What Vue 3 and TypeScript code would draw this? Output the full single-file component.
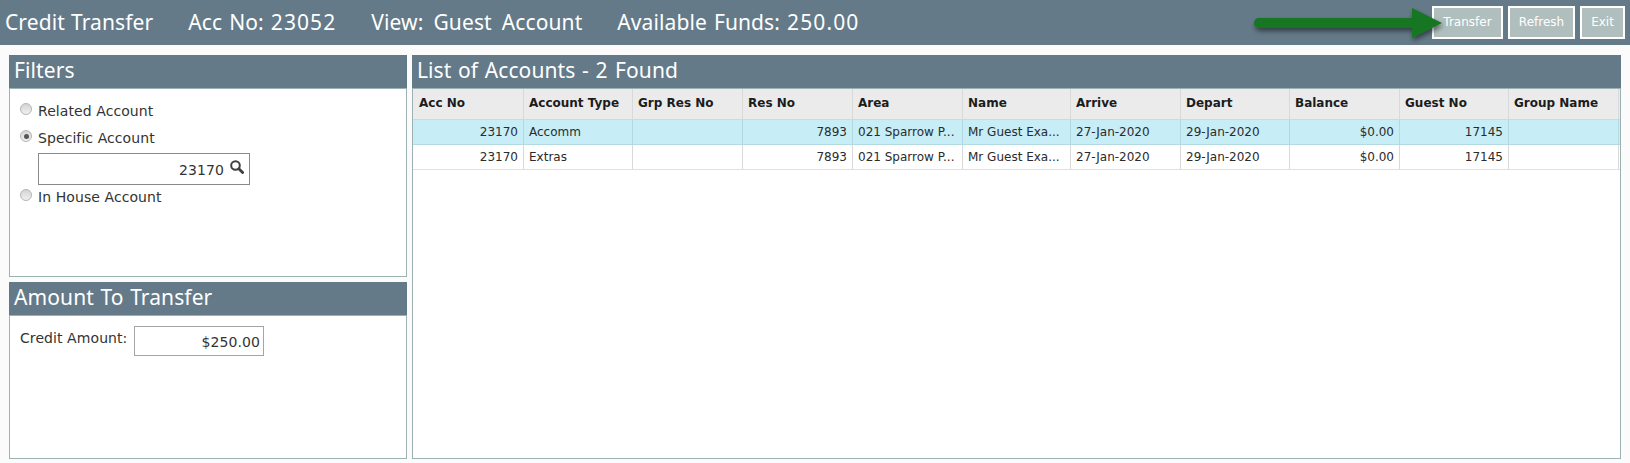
<script setup lang="ts">
const columns = ['Acc No', 'Account Type', 'Grp Res No', 'Res No', 'Area', 'Name', 'Arrive', 'Depart', 'Balance', 'Guest No', 'Group Name']
const rows = [
  ['23170', 'Accomm', '', '7893', '021 Sparrow P...', 'Mr Guest Exa...', '27-Jan-2020', '29-Jan-2020', '$0.00', '17145', ''],
  ['23170', 'Extras', '', '7893', '021 Sparrow P...', 'Mr Guest Exa...', '27-Jan-2020', '29-Jan-2020', '$0.00', '17145', ''],
]
const rightAligned = [0, 3, 8, 9]
</script>

<template>
  <div class="page">
    <header class="topbar">
      <div class="titles">
        <span class="tight">Credit Transfer</span>
        <span>Acc No: <span class="digits">23052</span></span>
        <span class="wide">View: Guest Account</span>
        <span>Available Funds: <span class="digits">250.00</span></span>
      </div>
      <div class="actions">
        <button class="btn transfer">Transfer</button>
        <button class="btn refresh">Refresh</button>
        <button class="btn exit">Exit</button>
      </div>
      <svg class="arrow" width="200" height="46" viewBox="0 0 200 46">
        <defs>
          <filter id="arrowShadow" x="-10%" y="-40%" width="120%" height="190%">
            <feDropShadow dx="1" dy="3" stdDeviation="2.5" flood-color="#000" flood-opacity="0.5" />
          </filter>
        </defs>
        <path
          d="M9 18 H162 V8 L192 23 L162 38 V28 H9 A5 5 0 0 1 9 18 Z"
          fill="#127622"
          filter="url(#arrowShadow)"
        />
      </svg>
    </header>

    <main class="content">
      <div class="left">
        <section class="panel filters">
          <h2 class="panel-title">Filters</h2>
          <div class="panel-body filter-body">
            <label class="radio-row first"><span class="radio"></span>Related Account</label>
            <label class="radio-row second"><span class="radio checked"></span>Specific Account</label>
            <div class="search-box">
              <span class="search-value">23170</span>
              <svg class="search-icon" width="14" height="14" viewBox="0 0 14 14">
                <circle cx="5.5" cy="5.5" r="4.3" fill="none" stroke="#3f3f3f" stroke-width="2" />
                <path d="M8.8 8.8 L12.6 12.6" stroke="#3f3f3f" stroke-width="2.8" stroke-linecap="round" />
              </svg>
            </div>
            <label class="radio-row third"><span class="radio"></span>In House Account</label>
          </div>
        </section>
        <section class="panel amount">
          <h2 class="panel-title">Amount To Transfer</h2>
          <div class="panel-body amount-body">
            <span class="amount-label">Credit Amount:</span>
            <div class="amount-input">$250.00</div>
          </div>
        </section>
      </div>

      <section class="panel list">
        <h2 class="panel-title">List of Accounts - <span class="digits">2</span> Found</h2>
        <div class="panel-body table-body">
          <div class="grid head">
            <div v-for="c in columns" :key="c" class="cell">{{ c }}</div>
          </div>
          <div v-for="(r, i) in rows" :key="i" class="grid row" :class="{ selected: i === 0 }">
            <div
              v-for="(v, j) in r"
              :key="j"
              class="cell"
              :class="{ right: rightAligned.includes(j) }"
            >{{ v }}</div>
          </div>
        </div>
      </section>
    </main>
  </div>
</template>

<style>
html, body { margin: 0; background: #fbfbfb; }
</style>

<style scoped>
.page {
  width: 1630px;
  height: 463px;
  overflow: hidden;
  background: #fbfbfb;
  font-family: "DejaVu Sans", Verdana, sans-serif;
  color: #222;
  display: flex;
  flex-direction: column;
}
.topbar {
  position: relative;
  height: 45px;
  flex: none;
  background: #647a88;
  display: flex;
  align-items: center;
  justify-content: space-between;
  box-sizing: border-box;
  padding: 0 5px;
}
.titles {
  display: flex;
  gap: 35px;
  color: #fff;
  font-family: "Noto Sans", sans-serif;
  font-size: 21px;
  letter-spacing: 0.1px;
  word-spacing: 1.5px;
  margin-top: -1px;
}
.tight { word-spacing: 0.5px; }
.wide { word-spacing: 4.5px; }
.digits { letter-spacing: 1.1px; }
.actions {
  display: flex;
  gap: 5px;
  margin-top: -1px;
}
.btn {
  height: 33px;
  box-sizing: border-box;
  border: 2px solid #fff;
  background: #b0bebe;
  color: #fff;
  font: 12px "DejaVu Sans", sans-serif;
  padding: 0;
}
.transfer { width: 71px; }
.refresh { width: 67px; }
.exit { width: 45px; }
.arrow {
  position: absolute;
  left: 1250px;
  top: 0;
}
.content {
  flex: 1;
  display: flex;
  gap: 5px;
  padding: 10px 9px 4px 9px;
  min-height: 0;
}
.left {
  width: 398px;
  flex: none;
  display: flex;
  flex-direction: column;
  gap: 5px;
}
.panel {
  display: flex;
  flex-direction: column;
  box-sizing: border-box;
  min-height: 0;
}
.filters { height: 222px; }
.amount { height: 177px; }
.list { flex: 1; }
.panel-title {
  margin: 0;
  height: 33px;
  flex: none;
  box-sizing: border-box;
  background: #647a88;
  color: #fff;
  font-family: "Noto Sans", sans-serif;
  font-size: 21px;
  font-weight: 400;
  line-height: 31px;
  padding-left: 5px;
  letter-spacing: 0.1px;
  word-spacing: 1px;
}
.panel-body {
  flex: 1;
  background: #fff;
  border: 1px solid #9db1b3;
  box-sizing: border-box;
  min-height: 0;
}
.filter-body {
  display: flex;
  flex-direction: column;
  align-items: flex-start;
  font-size: 14px;
  letter-spacing: 0.08px;
  color: #333;
  padding: 0 0 0 10px;
}
.radio-row {
  display: flex;
  align-items: center;
  gap: 6px;
  height: 17px;
  white-space: nowrap;
}
.radio-row.first { margin-top: 13px; }
.radio-row.second { margin-top: 10px; }
.radio-row.third { margin-top: 3px; }
.radio {
  width: 12px;
  height: 12px;
  border-radius: 50%;
  border: 1px solid #b5b5b5;
  background: linear-gradient(#d4d4d4, #f0f0f0);
  box-sizing: border-box;
  margin-top: -3px;
  position: relative;
}
.radio.checked::after {
  content: "";
  position: absolute;
  left: 2.5px;
  top: 2.5px;
  width: 5px;
  height: 5px;
  border-radius: 50%;
  background: #555;
}
.search-box {
  width: 212px;
  height: 32px;
  margin: 7px 0 0 18px;
  box-sizing: border-box;
  border: 1px solid #8a8a8a;
  background: #fff;
  display: flex;
  align-items: center;
  justify-content: flex-end;
  padding-right: 5px;
  gap: 6px;
}
.search-value { margin-top: 2px; }
.search-icon { margin-top: -5px; }
.amount-body {
  display: flex;
  align-items: flex-start;
  padding: 10px 0 0 10px;
  font-size: 14px;
  letter-spacing: 0.08px;
}
.amount-label {
  color: #333;
  margin-top: 4px;
  width: 114px;
  white-space: nowrap;
}
.amount-input {
  width: 130px;
  height: 30px;
  box-sizing: border-box;
  border: 1px solid #a5a5a5;
  text-align: right;
  line-height: 31px;
  padding-right: 3px;
  color: #333;
}
.table-body { font-size: 12px; color: #222; overflow: hidden; }
.grid {
  display: grid;
  grid-template-columns: 111px 109px 110px 110px 110px 108px 110px 109px 110px 109px 110px;
}
.head { height: 31px; background: #ebebeb; border-bottom: 1px solid #d6d6d6; box-sizing: border-box; }
.head .cell { font-weight: 700; line-height: 28px; color: #1c1c1c; }
.row { height: 25px; box-sizing: border-box; border-bottom: 1px solid #e0e0e0; background: #fff; }
.row.selected { background: #c7edf6; border-bottom-color: #b3d9e2; }
.row .cell { line-height: 25px; color: #2b2b2b; }
.cell {
  box-sizing: border-box;
  border-right: 1px solid #d9d9d9;
  padding: 0 5px;
  white-space: nowrap;
  overflow: hidden;
}
.grid .cell:first-child { padding-left: 6px; }
.row.selected .cell { border-right-color: #b3d9e2; }
.right { text-align: right; }
</style>
